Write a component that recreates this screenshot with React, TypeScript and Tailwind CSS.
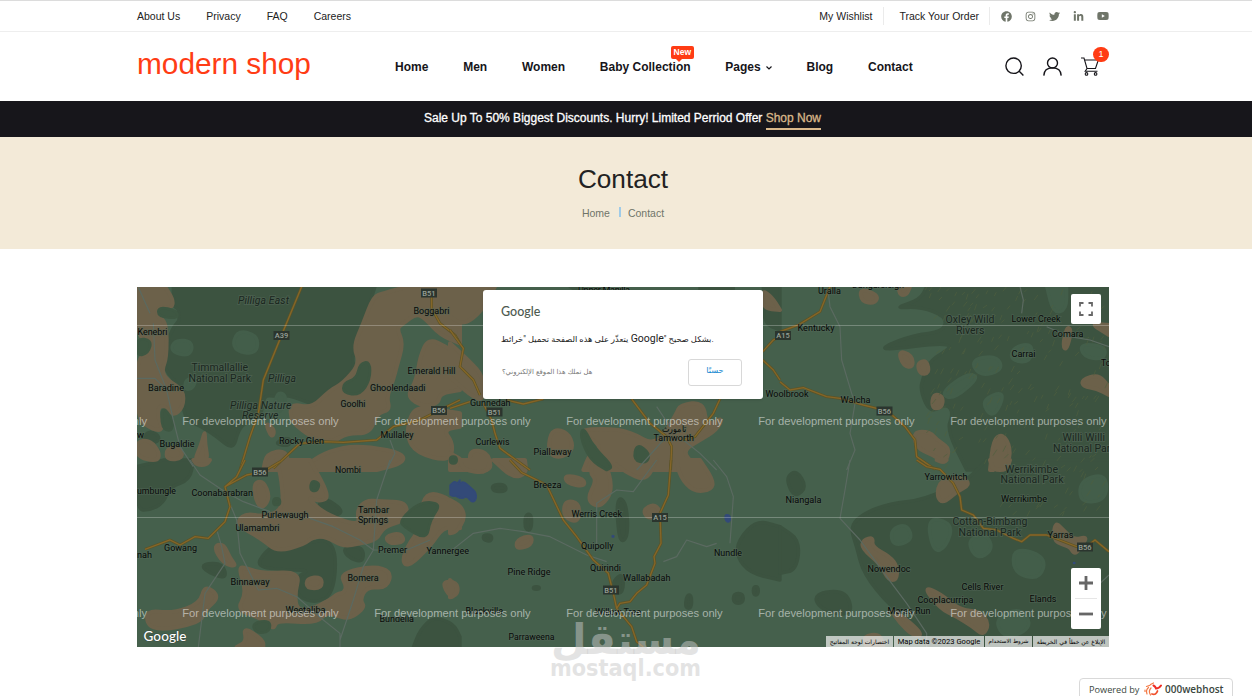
import React from "react";
import { FaFacebook, FaInstagram, FaTwitter, FaLinkedinIn, FaYoutube } from "react-icons/fa";

/* Terrain is stored per map sheet, three units to a pixel, each with its own origin. */
const sheets = [
  {
    x: 130,
    y: 280,
    forest:
      "M130 20H735L700 130 665 235 675 262 620 320 590 330 560 380 480 345 440 350 400 345 395 410 350 425 325 450 310 510 260 470 215 440 160 415 160 330 95 260 110 190 130 140 150 120 145 85 130 80Z M30 480L60 450 90 470 80 490Z M430 490L480 470 480 500Z",
    clear: "M320 150L385 165 380 225 305 210Z M135 178L190 185 180 230 120 215Z M165 300L200 290 190 325 165 330Z M440 335L470 345 460 390 430 400Z",
    brown:
      "M20 20H105L130 60 125 85 85 80 80 110 110 125 110 235 95 270 110 300 160 330 160 380 130 410 95 370 80 400 100 450 70 450 20 415V230L60 225 70 190 20 170Z M20 485L60 480 90 520 80 545 20 530Z M225 450L215 490 190 550 235 545 225 490Z M110 505L150 500 160 535 110 540Z M485 370L545 385 600 330 640 310 690 250 670 200 700 130 730 50 760 40 830 20H990V190L930 165 890 120 860 100 820 130 800 145 820 190 800 260 790 300 770 350 780 390 740 400 720 460 650 460 610 485 560 480 500 440 480 410Z M895 175L950 200 990 230V330L930 340 925 370 880 380 830 350 860 300 870 230Z M860 385H900L990 400V440L940 450 970 490 960 545 860 520 830 470 840 410Z M520 570L560 530 640 500 720 500 820 520 820 550 740 570Z M400 570L410 520 470 510 475 570Z M405 425L435 450 425 475Z",
    patch: "M690 250L720 245 720 300 690 345 640 340 640 310 680 295Z M95 375L130 420 125 455 95 445Z M85 80L140 92 145 115 85 110Z M20 175L65 180 55 220 20 228Z M960 530H980V550H960Z",
    gold: "M515 20L455 165 400 300 385 400 360 470 330 570 M905 50V85L930 130 975 165 990 190 M430 565L510 490 580 485 640 487 740 480 790 440 870 420 920 395 990 360",
    gray: "M25 22L60 100 M70 130L75 240 110 330 130 420 150 500 190 560 M20 295H75L110 330 M780 480L795 520 770 570",
    water: "",
  },
  {
    x: 450,
    y: 280,
    forest: "M360 20H460L430 60Z M750 20H850V40H750Z M940 20H990V150L940 130Z",
    clear: "",
    brown:
      "M0 20H135L95 95 40 135 0 110Z M0 190L60 245 100 290V365L60 345 0 290Z M300 460L325 447 360 465L370 510 330 535 295 520Z M380 450L470 445 540 455 620 500 680 400 690 375 760 365 770 440 820 410 800 450 750 480 700 510 720 545 760 570H400L420 520 460 500Z M60 510L110 515 125 560 110 570H30L60 550Z M0 520L40 540 30 570H0Z M935 30L965 50 990 90 940 85Z",
    patch: "M400 440L430 500 490 560 470 570 420 540 390 470Z M560 490L600 520 590 550 550 540Z",
    gold: "M0 150L40 205 30 260 70 300 90 345 M0 385L60 365 M170 360L220 372 280 357 M100 370L125 420 135 460 150 505 240 570 M545 357L600 430 650 470 665 500 662 570 M810 357L790 400 735 470 700 480 M938 215L970 180 990 170 M938 240L970 270 990 300",
    gray: "M700 480L750 520 800 570 M560 570L640 480 M620 380L660 440",
    water: "",
  },
  {
    x: 780,
    y: 280,
    forest:
      "M340 85L420 60 440 20H987V570H560L500 450 520 400 500 370 450 400 420 330 430 290 450 240 520 200 480 190 320 210 310 200 400 165 490 155 500 110 420 80Z",
    clear: "M480 340L560 280 600 290 520 360Z M570 240L650 225 670 270 600 290Z M700 200L760 190 750 250 690 240Z M800 20H860V90L820 100Z M900 190L980 200 970 240 910 230Z M600 360L680 330 640 420Z",
    brown:
      "M240 25L295 45 285 70 245 65Z M355 20H390L380 45 360 45Z M355 212L395 225 400 262 370 258Z M412 250L440 240 448 280 420 282Z M460 340L490 350 485 385 455 385Z M400 455L450 455 470 480 510 505 495 550 460 525 410 505Z M640 480L665 462 688 490L690 545 640 570H630Z M860 140L875 150 860 210 848 200Z M930 130L987 135V165Z M905 300L955 283 987 320V345L950 325 910 320Z",
    patch: "",
    gold: "M150 20L120 95 55 135 0 155 M0 305L30 330 70 323 140 350 180 355 250 375 290 385 330 400 375 440 405 480 410 530 465 568",
    gray: "M145 40L150 80 180 140 185 240 215 340 225 370 210 460 225 510 200 570 M720 20L730 60 725 100 M800 140L870 170 930 180 987 200",
    water: "",
  },
  {
    x: 130,
    y: 460,
    forest:
      "M20 20L100 0H190L180 60 120 80 100 130 60 150 20 150Z M400 280L470 225 540 250 590 235 620 280 610 400 560 430 500 410 500 350 540 330 460 330 380 320Z M870 510L910 470 970 490 990 530V561H850Z M220 310L280 310 290 360 220 330Z M640 260H700V310L650 290Z M580 110L640 150 620 170 560 150Z",
    clear: "",
    brown:
      "M190 0H240L230 15 200 15Z M370 70L400 62 420 110L400 145 380 130Z M440 0H540L600 110 570 125 530 110 580 160 690 200 680 150 710 120 750 125 830 125 830 180 760 200 740 240 690 250 640 260 590 230 550 230 520 255 440 275 400 240 330 200 325 180 350 160 400 170 460 150 455 60Z M890 97L950 110 990 150V205L940 200 900 260 830 325 815 290 870 200 940 170 870 160Z M765 230L810 218 825 245 780 252Z M250 260L280 250 300 295 320 320 280 310Z M325 320L350 325 400 340 510 335 495 400 500 450 540 450 600 420 625 400 640 400 650 380 630 340 730 318 785 335 770 385 710 380 690 420 705 440 670 470 640 475 590 455 560 490 440 480 430 510 395 475 320 450 350 400Z M530 355L575 350 575 385 530 385Z M225 375L270 410 225 450 210 490 60 515 45 450 130 460 210 430Z M340 500L400 540 400 561H320L350 545Z M935 365L980 365 985 400 960 412Z",
    patch: "M810 180L870 125 935 130 900 180 890 240 820 200Z M545 60L570 70 560 95 540 90Z M430 115H450V135H430Z M365 490L420 480 420 515 380 520Z",
    gold: "M345 0L320 50 285 80 300 140 285 185 235 235 195 230 150 255 120 240 45 268 M450 5L400 35 350 45 285 80",
    gray: "M180 0L210 45 285 95 340 125 420 155 M285 95L320 180 330 280 385 390 440 385 500 410 580 480 630 520 630 561 M540 175L610 200 690 240 730 270 700 320 670 420 630 540 M780 0L740 120 730 270 M730 270H830L900 240 M262 215L275 260 285 310 225 400 205 561",
    water: "M962 90L990 60V115L970 105Z",
  },
  {
    x: 450,
    y: 460,
    forest:
      "M505 110L530 130 535 230 510 250 500 160Z M125 75L165 72 170 95 130 95Z M225 165L245 160 245 210 225 210Z M100 225H125V245L100 240Z M865 240L920 180 990 200V360L900 340 860 290Z M710 405H725V445H705Z M490 360L520 340 520 400 490 400Z M850 400H880V430H850Z M910 380H925V405H910Z M250 380H268V388H250Z",
    clear: "",
    brown:
      "M30 0H120L110 40 40 30Z M130 0H225L230 40 190 55Z M345 45L400 55 405 80 350 70Z M430 0H465L490 90 450 145 410 120 440 60 420 40Z M480 0H620L590 60 540 45Z M680 0H750L790 60 785 90 730 95 690 50Z M345 120L390 130 385 190 340 170Z M0 120L35 140 45 175 20 215 0 220Z M200 240L245 225 245 255 200 268Z M580 150L610 132 630 150 620 175 590 172Z M0 360L25 385 10 410 0 412Z",
    patch: "",
    gold: "M180 0L215 38 240 50 290 75 340 180 380 230 430 300 475 340 490 400 500 445 545 500 560 545 580 561 M663 0L655 105 630 160 633 250 612 290 615 310 590 375 560 400 540 425 510 430 500 445",
    gray: "M0 275L70 220 150 205 220 215 300 230 410 285 470 305 M620 0L550 95 500 90 440 130 440 260 M790 0L830 50 850 110 840 250 M800 250L770 260 710 240 680 290 640 305",
    water: "M0 75L15 62 25 75 40 62 65 85 80 98 78 122 65 128 50 108 35 118 25 105 10 110 0 105Z M824 162L842 166 840 188 826 184Z M486 226L492 226 492 232 486 232Z",
  },
  {
    x: 780,
    y: 460,
    forest:
      "M210 200L250 160 330 130 430 120 560 60 600 20 620 0H987V561H440L400 480 330 440 250 340 230 260Z M20 50L50 30 80 80 50 110 30 90Z M0 200L60 240 50 330 0 340Z M100 400L200 390 220 470 120 450Z",
    clear: "M440 170L520 190 500 260 460 280Z M560 240L620 220 640 270 590 300Z M700 260L800 290 780 360 700 340Z M640 480L720 440 760 500 680 540Z M330 210L380 190 400 240 340 260Z M900 60L980 40 980 120 900 130Z",
    brown:
      "M630 0H690L680 30 640 30Z M470 0H500L490 8Z M480 60L550 50 570 75 530 95 490 130 470 110Z M250 240L280 232 275 260 330 290 352 320 350 360 325 360 300 310 245 265Z M430 380L480 400 540 450 600 455 627 490 610 527 580 500 530 470 480 445Z M330 445L370 470 430 525 400 528 360 490Z M825 185L850 210 880 240 920 230 910 250 890 278 880 278 870 260 820 245Z M250 528L300 522 310 561H260Z",
    patch: "",
    gold: "M410 0L440 20 480 28 520 70 540 110 545 150 580 165 610 205 650 210 700 235 725 245 750 225 800 225 890 260 925 255 945 240 987 275",
    gray: "M210 0L195 90 180 175 240 240 320 350 380 430 440 520V561 M987 345L960 370",
    water: "M880 307L885 307 885 311 880 311Z",
  },
];

type Point = [number, number];

const onSheetEdge = ([x, y]: Point) => x === 0 || x === 987 || x === 990 || y === 0 || y === 20 || y >= 561;

/* Rounds the corners of straight-edged areas, leaving those on a sheet's edge sharp. */
const smooth = (d: string) =>
  d
    .split("Z")
    .filter((s) => s.trim())
    .map((shape) => {
      const tokens = shape.match(/[MLHV]|-?[\d.]+/g) ?? [];
      const pts: Point[] = [];
      let cmd = "M";
      for (let i = 0; i < tokens.length; ) {
        if (/[MLHV]/.test(tokens[i])) {
          cmd = tokens[i++];
          continue;
        }
        const [px, py] = pts[pts.length - 1] ?? [0, 0];
        if (cmd === "H") pts.push([+tokens[i++], py]);
        else if (cmd === "V") pts.push([px, +tokens[i++]]);
        else pts.push([+tokens[i++], +tokens[i++]]);
      }
      const n = pts.length;
      const mid = (a: Point, b: Point) => `${(a[0] + b[0]) / 2} ${(a[1] + b[1]) / 2}`;
      let out = `M${mid(pts[n - 1], pts[0])}`;
      pts.forEach((p, i) => {
        const end = mid(p, pts[(i + 1) % n]);
        out += onSheetEdge(p) ? `L${p[0]} ${p[1]}L${end}` : `Q${p[0]} ${p[1]} ${end}`;
      });
      return out + "Z";
    })
    .join("");

/* Ridges: small olive flecks over the eastern ranges. */
const ridges = Array.from({ length: 230 }, (_, i) => {
  const x = 925 + ((i * 73.7) % 180);
  const y = 290 + ((i * i * 7.31 + i * 41.3) % (x > 1000 ? 230 : 180));
  return `M${x.toFixed(1)} ${y.toFixed(1)}l${(2 + (i % 3)).toFixed(1)} -${(3 + (i % 4)).toFixed(1)}`;
}).join("");

type Label = [string, number, number, number];

const towns: Label[] = [
  ["Kenebri", 137.5, 335, 30],
  ["Baradine", 148, 391, 36],
  ["Bugaldie", 159.5, 447, 35],
  ["w", 137, 438, 7],
  ["Rocky Glen", 279, 444, 45],
  ["Goolhi", 340.5, 407, 25],
  ["Ghoolendaadi", 370, 391, 55.5],
  ["Boggabri", 413.5, 313.5, 36],
  ["Emerald Hill", 407.5, 373.5, 48],
  ["Mullaley", 380.5, 438, 33],
  ["Gunnedah", 470, 406, 40.5],
  ["Curlewis", 475.5, 445, 34],
  ["Piallaway", 533.5, 454.5, 38],
  ["تامورث", 662, 432, 25],
  ["Tamworth", 653.5, 441, 40.5],
  ["Uralla", 818, 294, 23],
  ["Kentucky", 797.5, 331, 37],
  ["Woolbrook", 765.5, 397, 43],
  ["Walcha", 840.5, 403, 30],
  ["Lower Creek", 1011.5, 322, 49],
  ["Comara", 1052, 336.5, 31.5],
  ["Carrai", 1011.5, 357, 24],
  ["Tooraweenah", 1101, 366, 52],
  ["Nombi", 335, 472.5, 26],
  ["umbungle", 137, 494, 39],
  ["Coonabarabran", 191.5, 495.5, 61.5],
  ["Purlewaugh", 261.5, 518, 47],
  ["Ulamambri", 235.5, 530.5, 44],
  ["Tambar", 358, 513, 31],
  ["Springs", 358, 522.5, 30],
  ["Gowang", 164, 551, 33],
  ["nah", 137, 557.5, 15],
  ["Premer", 378, 552.5, 29],
  ["Yannergee", 426.5, 554, 42.5],
  ["Bomera", 347.5, 581, 31],
  ["Binnaway", 230.5, 584.5, 39],
  ["Weetaliba", 285.5, 612.5, 40],
  ["Bundella", 379.5, 622, 34.5],
  ["Breeza", 533.5, 487.5, 28],
  ["Werris Creek", 571.5, 517, 50.5],
  ["Quipolly", 581, 548.5, 32.5],
  ["Quirindi", 590, 570.5, 31],
  ["Pine Ridge", 507.5, 574.5, 43],
  ["Wallabadah", 623, 581, 47.5],
  ["Nundle", 714, 555.5, 28],
  ["Blackville", 465.5, 613.5, 37.5],
  ["Willow Tree", 595, 615, 46],
  ["Parraweena", 508.5, 639.5, 46],
  ["Niangala", 785.5, 503, 36],
  ["Yarrowitch", 924.5, 479.5, 43],
  ["Werrikimbe", 1001, 501.5, 46],
  ["Yarras", 1047.5, 538, 26],
  ["Nowendoc", 867.5, 572, 43],
  ["Cells River", 961.5, 590, 42],
  ["Cooplacurripa", 917.5, 602.5, 56],
  ["Mares Run", 887.5, 614, 43],
  ["Elands", 1029.5, 602, 27],
];

const parks: Label[] = [
  ["Timmallallie", 191.5, 371, 56.5],
  ["National Park", 188.5, 381.5, 62.5],
  ["Oxley Wild", 945.5, 323, 49],
  ["Rivers", 956, 334, 28.5],
  ["Willi Willi", 1062.5, 440.5, 42.5],
  ["National Park", 1053, 451.5, 62.5],
  ["Werrikimbe", 1005, 472.5, 53],
  ["National Park", 1000.5, 483, 63],
  ["Cottan-Bimbang", 952.5, 525, 75],
  ["National Park", 958.5, 535.5, 62.5],
];

const reserves: Label[] = [
  ["Pilliga East", 238, 303.5, 51],
  ["Pilliga", 268, 381.5, 28],
  ["Pilliga Nature", 230, 408.5, 61.5],
  ["Reserve", 242, 419, 36.5],
];

const shields: [string, number, number][] = [
  ["A39", 281.5, 335.5],
  ["B51", 429, 293],
  ["B56", 439, 410.5],
  ["B51", 494.5, 412],
  ["A15", 783, 335.5],
  ["B56", 884.5, 411],
  ["B56", 260, 472],
  ["A15", 660, 517.5],
  ["B51", 611, 590],
  ["B56", 1085, 547],
];

const TerrainMap = () => (
  <svg viewBox="137 287 972 360" className="block h-[360px] w-[972px] font-['Roboto',sans-serif]">
    <rect x="137" y="287" width="972" height="360" fill="#45604c" />
    {(
      [
        ["forest", "#3c5340", 10],
        ["clear", "#435e4a", 10],
        ["brown", "#6c614a", 12],
        ["patch", "#3e5742", 8],
        ["water", "#334a78", 4],
      ] as const
    ).map(([key, color, edge]) =>
      sheets.map((s, i) => (
        <path key={key + i} d={smooth(s[key])} transform={`translate(${s.x} ${s.y}) scale(0.33333)`} fill={color} stroke={color} strokeWidth={edge} strokeLinejoin="round" />
      ))
    )}
    <path d={ridges} stroke="#50603f" strokeWidth="1" opacity=".65" />
    {sheets.map((s, i) => (
      <g key={i} transform={`translate(${s.x} ${s.y}) scale(0.33333)`} fill="none" strokeLinejoin="round">
        <path d={s.gray} stroke="#5b6a61" strokeWidth="3.5" />
        <path d={s.gold} stroke="#5c5326" strokeWidth="8" />
        <path d={s.gold} stroke="#856628" strokeWidth="4" />
      </g>
    ))}
    <path d="M137 325.5H1109M137 517.5H1109" stroke="#fff" strokeOpacity=".26" />
    {shields.map(([t, x, y], i) => (
      <g key={i}>
        <rect x={x - 8} y={y - 4.5} width="16" height="9" fill="#2b352e" />
        <text x={x} y={y + 2.7} textAnchor="middle" fontSize="7.5" fontWeight="500" fill="#98a096">{t}</text>
      </g>
    ))}
    <g fontSize="10.5" fill="#1a261e" stroke="#56695b" strokeOpacity=".5" strokeWidth="1.8" paintOrder="stroke">
      {parks.map(([t, x, y, w], i) => (
        <text key={i} x={x} y={y} textLength={w}>{t}</text>
      ))}
      {reserves.map(([t, x, y, w], i) => (
        <text key={i} x={x} y={y} textLength={w} fontStyle="italic" fontSize="10.5">{t}</text>
      ))}
    </g>
    <g fontSize="9.2" fill="#070a08" stroke="#56695b" strokeOpacity=".5" strokeWidth="1.6" paintOrder="stroke">
      {towns.map(([t, x, y, w], i) => (
        <text key={i} x={x} y={y} textLength={w} lengthAdjust="spacingAndGlyphs">{t}</text>
      ))}
      <text x="578" y="293" textLength="52">Upper Manilla</text>
      <text x="852" y="287.5" textLength="52">Dangarsleigh</text>
    </g>
    <g className="font-['Liberation_Sans',sans-serif]" fontSize="11.2" fill="#fff" fillOpacity=".52">
      {[425.3, 617.3].map((y) =>
        [-9.5, 182.2, 374.2, 566.2, 758.2, 950.2].map((x) => (
          <text key={`${x}-${y}`} x={x} y={y} textLength="156.5">For development purposes only</text>
        ))
      )}
    </g>
    <text x="143.5" y="640.5" textLength="43" fontSize="13.5" fontWeight="500" fill="#fff" stroke="#3a4a3e" strokeWidth="1" paintOrder="stroke" className="font-['Lato',sans-serif]">Google</text>
  </svg>
);

const TopBar = () => (
  <div className="flex h-8 justify-center border-t border-b border-t-[#dcdcdc] border-b-[#eeeeee] pr-[6px] text-[10.5px] text-[#222]">
    <div className="flex w-[972px] items-center justify-between">
      <div className="flex gap-[26px] pt-[2px]">
        <a>About Us</a>
        <a>Privacy</a>
        <a>FAQ</a>
        <a>Careers</a>
      </div>
      <div className="flex h-[18px] items-center">
        <a className="pt-[2px]">My Wishlist</a>
        <span className="mr-[15px] ml-[11px] h-full w-px bg-[#ebebeb]" />
        <a className="pt-[2px]">Track Your Order</a>
        <span className="mr-[11px] ml-[10px] h-full w-px bg-[#ebebeb]" />
        <div className="flex items-center gap-[13px] text-[11px] text-[#6f7569]">
          <FaFacebook />
          <FaInstagram />
          <FaTwitter />
          <FaLinkedinIn />
          <FaYoutube className="text-[12px]" />
        </div>
      </div>
    </div>
  </div>
);

const Header = () => (
  <header className="flex h-[69px] justify-center pr-[6px]">
    <div className="flex w-[972px] items-center">
      <div className="w-[258px] pb-[5px] text-[29.8px] leading-none text-[#ff3c14]">modern shop</div>
      <nav className="flex items-center gap-[34.8px] text-[12px] font-bold text-[#16151a]">
        <a>Home</a>
        <a>Men</a>
        <a>Women</a>
        <a className="relative">
          Baby Collection
          <span className="absolute -top-[12px] left-[71px] flex h-[13px] w-[23px] items-center justify-center rounded-[2px] bg-[#ff3c14] text-[8.5px] text-white">
            New
            <svg viewBox="0 0 8 4" className="absolute top-[12px] left-[4px] h-1 w-2 fill-[#ff3c14]"><path d="M0 0H8L4 4Z" /></svg>
          </span>
        </a>
        <a className="flex items-center gap-[5px]">
          Pages
          <svg viewBox="0 0 6 4" className="mt-[3px] h-1 w-1.5 fill-none stroke-[#16151a]"><path d="M.5 .5L3 3L5.5 .5" strokeWidth="1.2" /></svg>
        </a>
        <a>Blog</a>
        <a>Contact</a>
      </nav>
      <div className="ml-auto flex items-center gap-[19px] pr-[10px]">
        <svg viewBox="0 0 19 19" className="size-[19px] fill-none stroke-[#16151a]" strokeWidth="1.4"><circle cx="8.6" cy="8.7" r="7.7" /><path d="M14 14L18.4 18.4" /></svg>
        <svg viewBox="0 0 19 19" className="size-[19px] fill-none stroke-[#16151a]" strokeWidth="1.4"><circle cx="9.5" cy="6" r="5" /><path d="M.8 18.6C1 13.5 4.5 10.9 9.5 10.9S18 13.5 18.2 18.6" /></svg>
        <div className="relative">
          <svg viewBox="0 0 18 19" className="h-[19px] w-[18px] fill-none stroke-[#16151a]" strokeWidth="1.1"><path d="M0 1H3L6 11.5H14.5L17.3 3H3.6M6 11.5L4.2 14.2H16.5" /><circle cx="5.5" cy="16.9" r="1.3" /><circle cx="14.6" cy="16.9" r="1.3" /></svg>
          <span className="absolute -top-[10px] left-[12px] flex h-[15px] w-4 items-center justify-center rounded-full bg-[#ff3c14] text-[9px] text-white">1</span>
        </div>
      </div>
    </div>
  </header>
);

const MapDialog = () => (
  <div className="absolute top-[3px] left-[346px] flex h-[109px] w-[280px] flex-col rounded-[3px] bg-white px-[18px] pt-[13px] shadow">
    <div className="h-[18px] font-['Lato',sans-serif] text-[12.5px] leading-[18px] font-medium text-[#4d5a50]">Google</div>
    <p className="mt-[9px] h-[18px] font-['Roboto','DejaVu_Sans',sans-serif] text-[9.5px] leading-[18px] whitespace-nowrap text-[#222]">
      <span className="text-[8.3px]">يتعذّر على هذه الصفحة تحميل "خرائط</span> <span className="text-[10.5px]">Google</span><span className="text-[8.3px]">" بشكل صحيح.</span>
    </p>
    <div className="mt-[11px] flex items-center justify-between pr-[3px] font-['DejaVu_Sans',sans-serif]">
      <a className="pl-px text-[6.8px] text-[#777]" dir="rtl">هل تملك هذا الموقع الإلكتروني؟</a>
      <button className="h-[27px] w-[54px] rounded-[3px] border border-[#d8d8d8] pb-1 text-[8.2px] text-[#1688d0]">حسنًا</button>
    </div>
  </div>
);

export default function App() {
  return (
    <div className="relative h-[696px] w-[1252px] overflow-hidden bg-white font-['Liberation_Sans',Arial,sans-serif]">
      <TopBar />
      <Header />
      <div className="flex h-9 items-start justify-center bg-[#17161b] pt-[7px] pr-[7px] text-[12px] text-white">
        <span className="leading-[20px] [-webkit-text-stroke:0.3px_currentColor]">Sale Up To 50% Biggest Discounts. Hurry! Limited Perriod Offer&nbsp;</span>
        <a className="h-[22px] border-b-2 border-[#d9b88a] leading-[20px] text-[#d9b88a] [-webkit-text-stroke:0.3px_currentColor]">Shop Now</a>
      </div>
      <section className="flex h-28 flex-col items-center bg-[#f3ead8] pt-[27px] pr-[6px]">
        <h1 className="text-[26.2px] leading-[30px] text-[#222]">Contact</h1>
        <div className="mt-[12px] flex items-center text-[10.5px] leading-[14px] text-[#6f7569]">
          <span>Home</span>
          <span className="mr-[7px] ml-[9px] -mt-[3px] h-[10px] w-[2px] bg-[#9fcbe8]" />
          <span>Contact</span>
        </div>
      </section>
      <main className="flex justify-center pt-[38px] pr-[6px]">
        <div className="relative h-[360px] w-[972px] overflow-hidden">
          <TerrainMap />
          <MapDialog />
          <div className="absolute top-[7px] right-[8px] flex size-[30px] items-center justify-center rounded-[2px] bg-white">
            <svg viewBox="0 0 14 14" className="size-[14px] fill-none stroke-[#666]" strokeWidth="1.8"><path d="M1 4.5V1H4.5M9.5 1H13V4.5M13 9.5V13H9.5M4.5 13H1V9.5" /></svg>
          </div>
          <div className="absolute right-[8px] bottom-[18px] flex h-[61px] w-[30px] flex-col items-center justify-between rounded-[2px] bg-white py-2">
            <svg viewBox="0 0 14 14" className="size-[14px] stroke-[#666]" strokeWidth="2.8"><path d="M0 7H14M7 0V14" /></svg>
            <span className="h-px w-[22px] bg-[#e6e6e6]" />
            <svg viewBox="0 0 14 14" className="size-[14px] stroke-[#666]" strokeWidth="2.8"><path d="M0 7H14" /></svg>
          </div>
          <div className="absolute right-0 bottom-0 flex h-[11px] gap-px text-[7px] leading-[11px] whitespace-nowrap text-black">
            <span className="flex w-[67px] justify-center bg-[#f5f5f5]/70 font-['DejaVu_Sans',sans-serif] text-[6px]">اختصارات لوحة المفاتيح</span>
            <span className="flex w-[90px] justify-center bg-[#f5f5f5]/70 font-['Roboto',sans-serif] text-[7.6px]">Map data ©2023 Google</span>
            <span className="flex w-[47px] justify-center bg-[#f5f5f5]/70 font-['DejaVu_Sans',sans-serif] text-[5.6px]">شروط الاستخدام</span>
            <span className="flex w-[76px] justify-center bg-[#f5f5f5]/70 font-['DejaVu_Sans',sans-serif] text-[6px]">الإبلاغ عن خطأ في الخريطة</span>
          </div>
        </div>
      </main>
      <svg viewBox="0 0 160 74" className="absolute top-[611px] left-[546px] h-[74px] w-[160px] fill-[#c8c8c8]/50">
        <text x="155" y="43" direction="rtl" textLength="150" lengthAdjust="spacingAndGlyphs" fontSize="42" fontWeight="700" className="font-['DejaVu_Sans',sans-serif]">مستقل</text>
        <text x="4" y="65" textLength="151" lengthAdjust="spacingAndGlyphs" fontSize="23" fontWeight="700" className="font-['DejaVu_Sans',sans-serif]">mostaql.com</text>
      </svg>
      <div className="absolute top-[678px] left-[1079px] flex h-[24px] w-[154px] items-start rounded-[4px] border border-[#d9d9d9] bg-white pt-[3px] pl-[9px] font-['Open_Sans',sans-serif] leading-[15px] text-[#3a463d]">
        <span className="w-[55px] text-[9.2px] font-medium whitespace-nowrap">Powered by</span>
        <svg viewBox="0 0 18 14" className="h-[14px] w-[18px] fill-none" strokeLinecap="round">
          <path d="M8 12Q12 13.5 13.5 9" stroke="#f0502c" strokeWidth="1.8" />
          <path d="M9.5 3.5Q11.5 4.5 12 6.5Q15 6.5 17 3.5" stroke="#ee2d24" strokeWidth="2" />
          <path d="M7 6Q4 9 6.5 13M4.5 5.5Q1.5 8 3 12M6.5 2.5L9.5 1M2.5 4.5L6 3.2M1 8V9.5" stroke="#f47a45" strokeWidth="1.2" />
        </svg>
        <span className="ml-[3px] text-[10px] font-semibold">000webhost</span>
      </div>
    </div>
  );
}
